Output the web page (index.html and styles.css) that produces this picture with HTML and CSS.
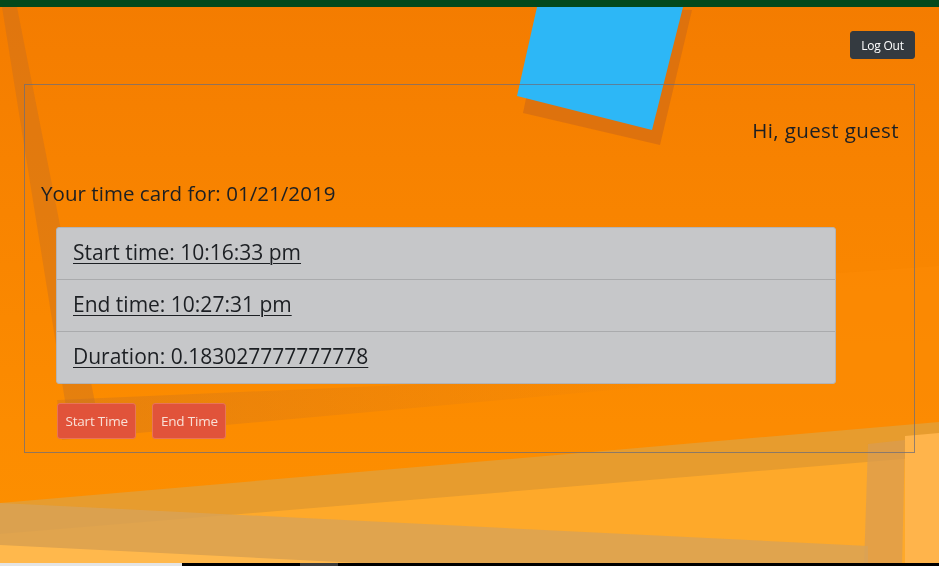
FILE: index.html
```html
<!DOCTYPE html>
<html lang="en">
<head>
<meta charset="utf-8">
<title>Time Card</title>
<link rel="stylesheet" href="styles.css">
</head>
<body>
<svg class="backdrop" viewBox="0 0 939 566" preserveAspectRatio="none" aria-hidden="true">
  <defs>
    <linearGradient id="bg" x1="0" y1="0" x2="0" y2="1">
      <stop offset="0" stop-color="#f47c00"/>
      <stop offset="0.75" stop-color="#fc8c00"/>
      <stop offset="1" stop-color="#fd9000"/>
    </linearGradient>
    <linearGradient id="fadeband" x1="0" y1="0" x2="1" y2="0">
      <stop offset="0" stop-color="#b86a2a" stop-opacity="0.3"/>
      <stop offset="1" stop-color="#b86a2a" stop-opacity="0"/>
    </linearGradient>
  </defs>
  <rect x="0" y="0" width="939" height="566" fill="url(#bg)"/>
  <polygon points="700,283 939,266 939,430 700,450" fill="#fb8a04" opacity="0.6"/>
  <polygon points="2,7 17,7 100,428 70,432" fill="#b86a2a" opacity="0.33"/>
  <polygon points="57,400 700,372 700,382 62,440" fill="url(#fadeband)"/>
  <polygon points="545,7 692,10 660,145 523,113" fill="#d9700f" opacity="0.85"/>
  <polygon points="537,7 683,7 652,130 517,96" fill="#2db7f6"/>
  <polygon points="0,533 939,451 939,566 0,566" fill="#fea92a"/>
  <polygon points="0,503 939,422 939,456 0,534" fill="#e79c2e"/>
  <polygon points="905,436 939,433 939,566 905,566" fill="#ffb44b"/>
  <polygon points="868,444 905,440 902,566 864,566" fill="#d99d52" opacity="0.7"/>
  <polygon points="0,503 868,546 868,566 0,566" fill="#d8a258" opacity="0.8"/>
  <polygon points="0,545 420,566 0,566" fill="#ffb84c"/>
</svg>

<div class="topbar"></div>

<header class="nav">
  <button class="btn btn-dark" type="button">Log Out</button>
</header>

<main class="card-box">
  <h2 class="greeting">Hi, guest guest</h2>
  <h2 class="title">Your time card for: 01/21/2019</h2>
  <ul class="list">
    <li class="list-item"><a href="#">Start time: 10:16:33 pm</a></li>
    <li class="list-item"><a href="#">End time: 10:27:31 pm</a></li>
    <li class="list-item"><a href="#">Duration: 0.183027777777778</a></li>
  </ul>
  <div class="actions">
    <button class="btn btn-red" type="button">Start Time</button>
    <button class="btn btn-red" type="button">End Time</button>
  </div>
</main>

<footer class="taskstrip">
  <span class="ts-light"></span>
  <span class="ts-black"></span>
  <span class="ts-gray"></span>
  <span class="ts-black ts-fill"></span>
</footer>
</body>
</html>
```

FILE: styles.css
```css
* { box-sizing: border-box; }

html, body {
  margin: 0;
  padding: 0;
  height: 100%;
}

body {
  font-family: "Open Sans", "Noto Sans", "Liberation Sans", sans-serif;
  color: #1c1f23;
  min-height: 100vh;
  display: flex;
  flex-direction: column;
  overflow: hidden;
}

.backdrop {
  position: fixed;
  top: 0;
  left: 0;
  width: 100%;
  height: 100%;
  z-index: -1;
}

.topbar {
  height: 7px;
  background: #03491c;
  flex: none;
}

.nav {
  display: flex;
  justify-content: flex-end;
  padding: 24px 24px 0 0;
}

.btn {
  font-family: inherit;
  border-radius: 3px;
  cursor: pointer;
}

.btn-dark {
  width: 65px;
  height: 28px;
  background: #343a40;
  border: 1px solid #343a40;
  color: #ffffff;
  font-size: 12px;
  padding: 0;
  letter-spacing: -0.2px;
}

.card-box {
  margin: 25px 24px 0 24px;
  border: 1px solid rgba(110, 110, 120, 0.75);
  padding: 0 15px 13px 16px;
}

.greeting {
  margin: 33px 0 0 0;
  text-align: right;
  font-size: 20.5px;
  font-weight: 400;
  line-height: 24px;
  letter-spacing: 0.4px;
}

.title {
  margin: 39px 0 0 0;
  font-size: 20.5px;
  font-weight: 400;
  line-height: 24px;
  letter-spacing: 0.05px;
}

.list {
  list-style: none;
  margin: 22px 0 0 15px;
  padding: 0;
  width: 780px;
  background: #c6c7c9;
  border: 1px solid #b3b4b6;
  border-radius: 3px;
}

.list-item {
  height: 52px;
  display: flex;
  align-items: center;
  padding: 0 16px;
  border-bottom: 1px solid #aaabad;
}

.list-item:last-child {
  border-bottom: none;
  height: 51px;
}

.list-item a {
  color: #1c1f23;
  font-size: 21px;
  line-height: 28px;
  margin-top: -3px;
  text-decoration: underline;
  text-decoration-thickness: 1px;
  text-underline-offset: 3px;
}

.actions {
  display: flex;
  gap: 16px;
  margin: 19px 0 0 16px;
}

.btn-red {
  height: 36px;
  padding: 0 7.5px;
  background: #e1533a;
  border: 1px solid #e87458;
  color: #f9e0d6;
  font-size: 13.5px;
  letter-spacing: -0.2px;
}

.taskstrip {
  margin-top: auto;
  height: 3px;
  display: flex;
  flex: none;
}

.ts-light { width: 182px; background: #e4e4e4; }
.ts-black { width: 118px; background: #000; }
.ts-gray { width: 38px; background: #3a3a3a; }
.ts-fill { flex: 1; width: auto; }
```
